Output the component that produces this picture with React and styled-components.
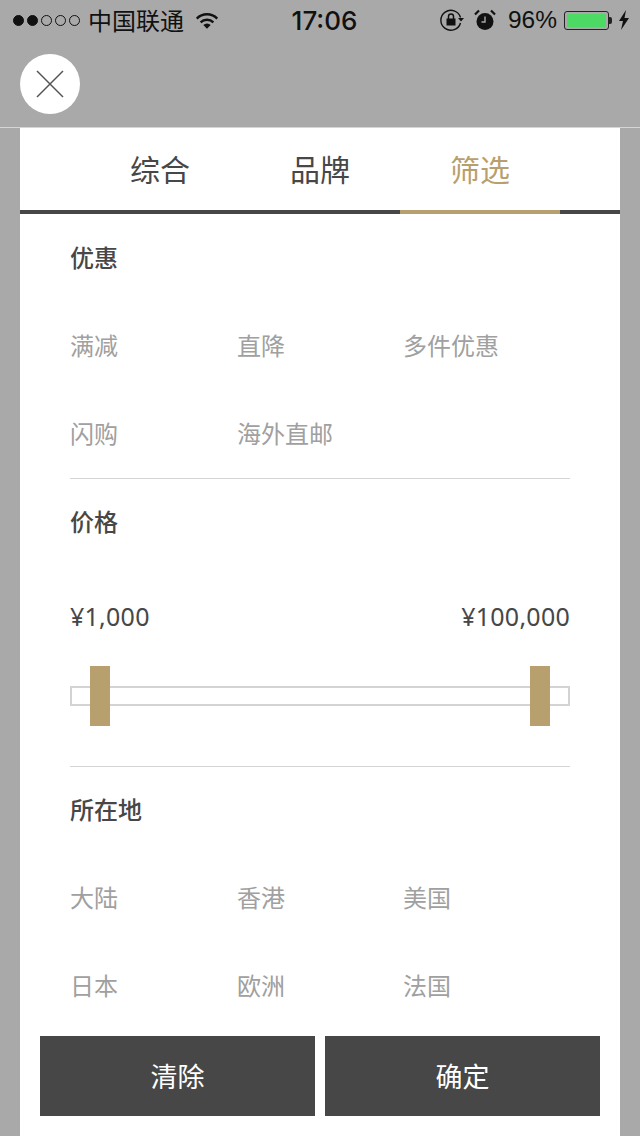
import styled, { createGlobalStyle } from 'styled-components'

const gold = '#b89f6e'
const dark = '#474747'

const GlobalStyle = createGlobalStyle`
  html, body {
    margin: 0;
    padding: 0;
    background: #a9a9a9;
  }
  * {
    box-sizing: border-box;
  }
`
const Page = styled.div`
  width: 640px;
  height: 1136px;
  display: flex;
  flex-direction: column;
  overflow: hidden;
  background: #a9a9a9;
  font-family: 'Liberation Sans', 'Noto Sans CJK SC', sans-serif;
`
const StatusBar = styled.div`
  height: 40px;
  flex: none;
  display: grid;
  grid-template-columns: 1fr auto 1fr;
  align-items: center;
  padding: 0 10px 0 13px;
  color: #111;
`
const StatusLeft = styled.div`
  display: flex;
  align-items: center;
`
const Dot = styled.span`
  width: 11px;
  height: 11px;
  margin-right: 3px;
  border-radius: 50%;
  border: 1px solid #111;
  background: ${(p) => (p.$on ? '#111' : 'transparent')};
`
const Carrier = styled.span`
  margin: 0 11px 0 5px;
  font-size: 24px;
  line-height: 40px;
  font-family: 'Noto Sans CJK SC', sans-serif;
`
const Clock = styled.span`
  margin-left: 6px;
  font-family: Inter, sans-serif;
  font-size: 26px;
  font-weight: 500;
`
const StatusRight = styled.div`
  display: flex;
  align-items: center;
  justify-content: flex-end;
`
const AlarmIcon = styled.svg`
  margin-left: 10px;
`
const Percent = styled.span`
  margin: 0 7px 0 12px;
  font-size: 24.5px;
`
const BatteryBox = styled.div`
  width: 45px;
  height: 19px;
  padding: 2px;
  border: 1px solid #222;
  border-radius: 3px;
`
const BatteryFill = styled.div`
  height: 100%;
  border-radius: 1px;
  background: #4cd964;
`
const BatteryCap = styled.div`
  width: 3px;
  height: 7px;
  margin-right: 6px;
  border-radius: 0 2px 2px 0;
  background: #222;
`
const Header = styled.div`
  height: 88px;
  flex: none;
  padding: 14px 20px;
  border-bottom: 1px solid #d5d5d5;
`
const CloseButton = styled.button`
  width: 60px;
  height: 60px;
  padding: 0;
  display: flex;
  align-items: center;
  justify-content: center;
  border: none;
  border-radius: 50%;
  background: #fff;
`
const Panel = styled.div`
  flex: 1;
  min-height: 0;
  margin: 0 20px;
  display: flex;
  flex-direction: column;
  background: #fff;
  font-family: 'Noto Sans CJK SC', sans-serif;
`
const Tabs = styled.div`
  flex: none;
  height: 86px;
  display: flex;
  justify-content: center;
  border-bottom: 4px solid ${dark};
`
const Tab = styled.div`
  width: 160px;
  height: 86px;
  padding-top: 18px;
  text-align: center;
  font-size: 30px;
  line-height: 44px;
  color: ${(p) => (p.$active ? gold : dark)};
  border-bottom: 4px solid ${(p) => (p.$active ? gold : dark)};
`
const Body = styled.div`
  flex: 1;
  min-height: 0;
  overflow: hidden;
  padding: 0 50px;
`
const Section = styled.section`
  border-bottom: ${(p) => (p.$last ? 'none' : '1px solid #d5d5d5')};
  margin-top: ${(p) => (p.$last ? '-1px' : '0')};
`
const Title = styled.h3`
  margin: 0;
  height: 88px;
  padding-bottom: ${(p) => (p.$raised ? '6px' : '4px')};
  display: flex;
  align-items: center;
  font-size: 24px;
  font-weight: 500;
  color: ${dark};
`
const Options = styled.div`
  display: grid;
  grid-template-columns: 167px 166px 1fr;
`
const Option = styled.div`
  height: 88px;
  padding-bottom: 4px;
  display: flex;
  align-items: center;
  font-size: 24px;
  color: #a0a0a0;
`
const Prices = styled.div`
  display: flex;
  justify-content: space-between;
  margin-top: 31px;
  font-family: 'Noto Sans', sans-serif;
  font-size: 25px;
  letter-spacing: 0.25px;
  line-height: 36px;
  color: ${dark};
`
const Slider = styled.div`
  position: relative;
  height: 20px;
  margin: 52px 0 60px;
  border: 2px solid #d3d3d3;
`
const Handle = styled.div`
  position: absolute;
  top: -22px;
  width: 20px;
  height: 60px;
  background: ${gold};
  ${(p) => (p.$right ? 'right: 18px;' : 'left: 18px;')}
`
const Footer = styled.div`
  flex: none;
  display: flex;
  gap: 10px;
  padding: 5px 20px 20px;
`
const ActionButton = styled.button`
  flex: 1;
  height: 80px;
  padding: 0 0 2px;
  border: none;
  background: ${dark};
  color: #fff;
  font-family: 'Noto Sans CJK SC', sans-serif;
  font-size: 27px;
`

function OptionGrid({ items }) {
  return (
    <Options>
      {items.map((item) => (
        <Option key={item}>{item}</Option>
      ))}
    </Options>
  )
}

function App() {
  return (
    <Page>
      <GlobalStyle />
      <StatusBar>
        <StatusLeft>
          <Dot $on />
          <Dot $on />
          <Dot />
          <Dot />
          <Dot />
          <Carrier>中国联通</Carrier>
          <svg width="24" height="20" viewBox="0 0 26 20">
            <path d="M1 7.5a17 17 0 0 1 24 0l-1.8 1.9a14.4 14.4 0 0 0-20.4 0z" fill="#111" />
            <path d="M5.2 11.7a11 11 0 0 1 15.6 0L19 13.5a8.500 8.500 0 0 0-12 0z" fill="#111" />
            <path d="M9 15.500a5.600 5.600 0 0 1 8 0L13 19.500z" fill="#111" />
          </svg>
        </StatusLeft>
        <Clock>17:06</Clock>
        <StatusRight>
          <svg width="24" height="24" viewBox="0 0 24 24" fill="none">
            <path d="M20.500 9.500A10 10 0 1 0 20.500 15" stroke="#111" strokeWidth="1.4" />
            <path d="M18 10h6l-3 3.500z" fill="#111" />
            <rect x="6.500" y="10.500" width="9" height="7" fill="#111" />
            <path d="M8.500 11V8.500a2.500 2.500 0 0 1 5 0V11" stroke="#111" strokeWidth="1.5" />
          </svg>
          <AlarmIcon width="22" height="22" viewBox="0 0 22 22">
            <circle cx="11" cy="12.500" r="8.500" fill="#111" />
            <path d="M11 7.500v5.500H7.500" stroke="#a9a9a9" strokeWidth="1.4" fill="none" />
            <path d="M1 5.500 5 1.500 M21 5.500 17 1.500" stroke="#111" strokeWidth="2.200" />
          </AlarmIcon>
          <Percent>96%</Percent>
          <BatteryBox>
            <BatteryFill />
          </BatteryBox>
          <BatteryCap />
          <svg width="12" height="20" viewBox="0 0 12 20">
            <path d="M8 0 1 11h4l-2 9 8-12H6.500z" fill="#111" />
          </svg>
        </StatusRight>
      </StatusBar>
      <Header>
        <CloseButton>
          <svg width="28" height="28" viewBox="0 0 28 28">
            <path d="M1 1 27 27 M27 1 1 27" stroke="#555" strokeWidth="1.500" />
          </svg>
        </CloseButton>
      </Header>
      <Panel>
        <Tabs>
          <Tab>综合</Tab>
          <Tab>品牌</Tab>
          <Tab $active>筛选</Tab>
        </Tabs>
        <Body>
          <Section>
            <Title>优惠</Title>
            <OptionGrid items={['满减', '直降', '多件优惠', '闪购', '海外直邮']} />
          </Section>
          <Section>
            <Title $raised>价格</Title>
            <Prices>
              <span>¥1,000</span>
              <span>¥100,000</span>
            </Prices>
            <Slider>
              <Handle />
              <Handle $right />
            </Slider>
          </Section>
          <Section $last>
            <Title>所在地</Title>
            <OptionGrid items={['大陆', '香港', '美国', '日本', '欧洲', '法国']} />
          </Section>
        </Body>
        <Footer>
          <ActionButton>清除</ActionButton>
          <ActionButton>确定</ActionButton>
        </Footer>
      </Panel>
    </Page>
  )
}

export default App
